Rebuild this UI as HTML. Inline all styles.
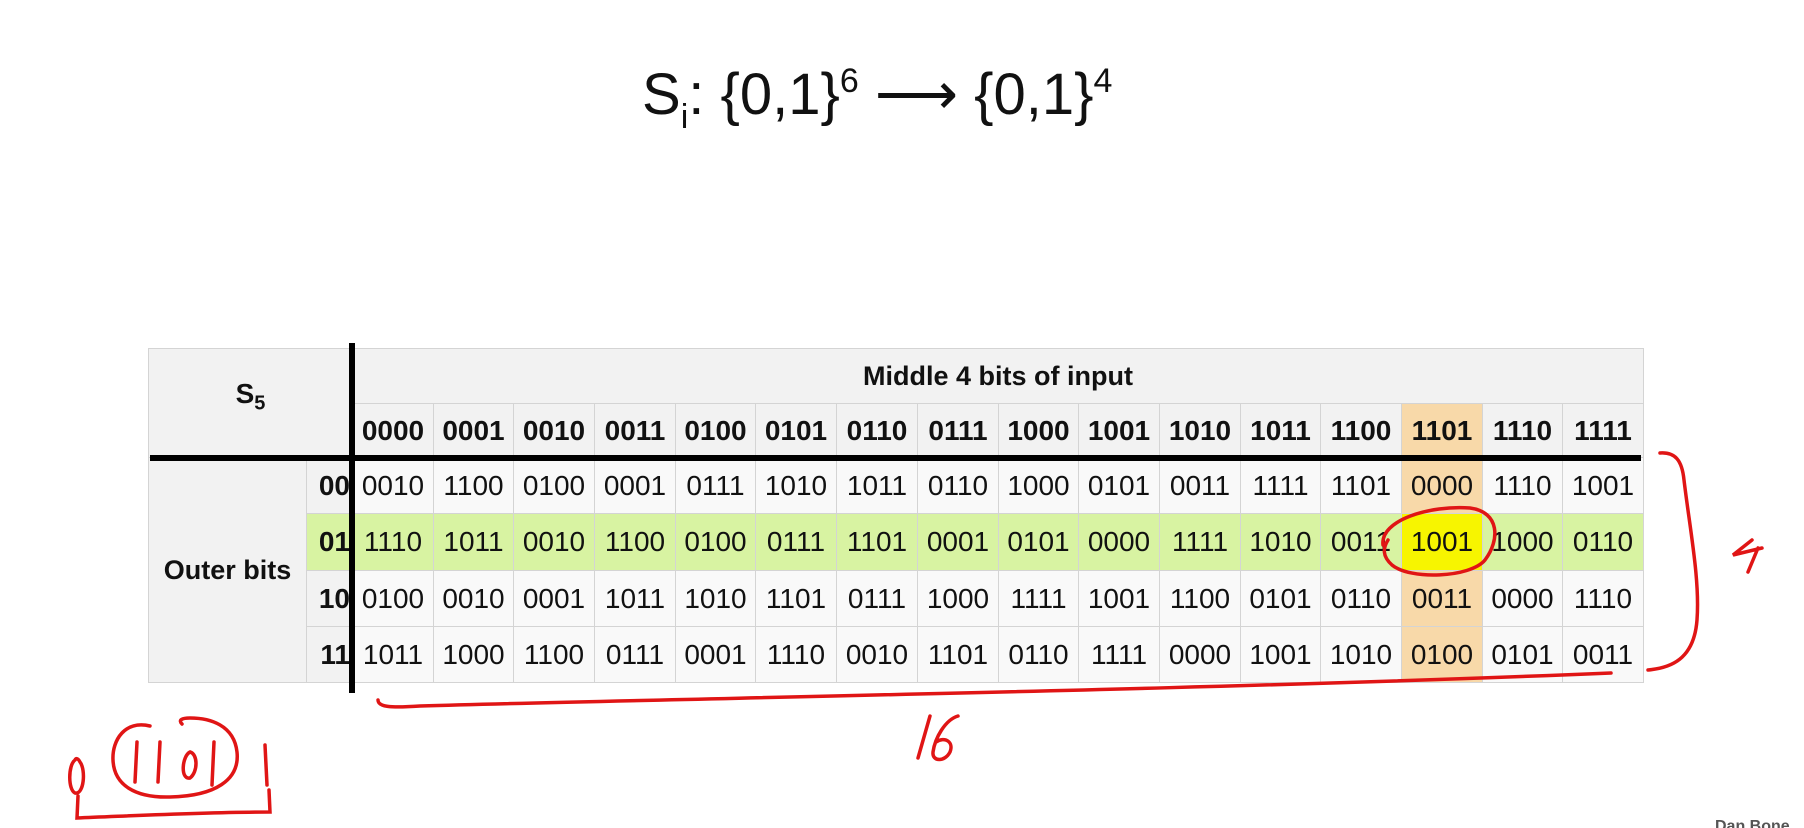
<!DOCTYPE html>
<html><head><meta charset="utf-8"><style>
html,body{margin:0;padding:0;background:#fff;width:1804px;height:828px;overflow:hidden;position:relative;font-family:"Liberation Sans",Arial,sans-serif;}
.t{position:absolute;left:642px;top:60px;font-size:58px;color:#111;white-space:nowrap;letter-spacing:0px;}
.c{position:absolute;box-sizing:border-box;border:1px solid #d4d4d4;display:flex;align-items:center;justify-content:center;font-size:28px;color:#111;background:#f9f9f9;}
.h{background:#f2f2f2;font-weight:bold;}
.g{background:#d8f3a2;}
.o{background:#f8d9a9;}
.y{background:#f7f500;}
</style></head><body>
<div class="t">S<sub style="font-size:34px;vertical-align:-14px">i</sub>: {0,1}<sup style="font-size:34px;vertical-align:22px">6</sup> ⟶ {0,1}<sup style="font-size:34px;vertical-align:22px">4</sup></div>
<div id="tb"></div>
<script>
const cols=["0000","0001","0010","0011","0100","0101","0110","0111","1000","1001","1010","1011","1100","1101","1110","1111"];
const rows=[
["0010","1100","0100","0001","0111","1010","1011","0110","1000","0101","0011","1111","1101","0000","1110","1001"],
["1110","1011","0010","1100","0100","0111","1101","0001","0101","0000","1111","1010","0011","1001","1000","0110"],
["0100","0010","0001","1011","1010","1101","0111","1000","1111","1001","1100","0101","0110","0011","0000","1110"],
["1011","1000","1100","0111","0001","1110","0010","1101","0110","1111","0000","1001","1010","0100","0101","0011"]];
const rl=["00","01","10","11"];
const ry=[457,513,570,626,682];
let h='';
function cell(x,y,w,hh,cls,txt,st){h+=`<div class="c ${cls}" style="left:${x}px;top:${y}px;width:${w+1}px;height:${hh+1}px;${st||''}">${txt}</div>`;}
cell(148,348,204,109,'h','<span>S<sub style="font-size:20px">5</sub></span>','padding-bottom:12px');
cell(148,457,158,225,'h','Outer bits','font-size:27px');
cell(352,348,1291,55,'h','Middle 4 bits of input','font-size:27px');
const cw=1291/16;
for(let i=0;i<16;i++){const x=Math.round(352+i*cw),w=Math.round(352+(i+1)*cw)-x;
 cell(x,403,w,54,i==13?'h o':'h',cols[i]);
 for(let r=0;r<4;r++){let cls=r==1?'g':'';if(i==13)cls=r==1?'y':'o';
  cell(x,ry[r],w,ry[r+1]-ry[r],cls,rows[r][i]);}}
for(let r=0;r<4;r++)cell(306,ry[r],46,ry[r+1]-ry[r],(r==1?'g ':'h ')+'',`<b>${rl[r]}</b>`,'justify-content:flex-end;padding-right:2px');
document.getElementById('tb').innerHTML=h;
</script>
<div style="position:absolute;left:150px;top:455px;width:1491px;height:6px;background:#000"></div>
<div style="position:absolute;left:349px;top:343px;width:6px;height:350px;background:#000"></div>
<svg width="1804" height="828" style="position:absolute;left:0;top:0" fill="none" stroke="#e01515" stroke-width="3.5" stroke-linecap="round">
<path d="M1383 545 C1380 520 1430 505 1470 508 C1500 512 1500 540 1485 560 C1470 578 1410 580 1392 565 C1382 556 1383 548 1388 540"/>
<path d="M1660 453 C1675 452 1682 460 1684 480 C1690 530 1700 580 1697 620 C1694 660 1670 668 1648 670"/>
<path d="M1762 548 L1733 555 L1752 540 M1758 548 L1748 572"/>
<path d="M378 700 C378 707 390 708 420 706 C700 698 1200 690 1611 673"/>
<path d="M930 716 L918 758 M958 716 C945 720 935 738 933 752 C932 762 945 762 950 752 C954 742 945 736 936 742"/>
<path d="M75 760 C68 765 68 790 75 793 C84 795 86 770 80 762 C78 758 76 758 75 760"/>
<path d="M150 726 C125 720 112 740 113 760 C114 785 135 798 170 797 C215 796 240 780 237 752 C234 725 210 718 190 718 C182 718 178 720 182 724"/>
<path d="M137 742 L135 782 M160 742 L158 782 M190 752 C182 756 180 780 190 778 C198 772 198 754 190 752 M214 742 L212 785 M265 745 L267 785"/>
<path d="M78 796 L77 818 C130 816 200 812 270 812 L269 790"/>
</svg>
<div style="position:absolute;left:1715px;top:818px;font-size:16px;color:#555;font-weight:bold">Dan Bone</div>
</body></html>
